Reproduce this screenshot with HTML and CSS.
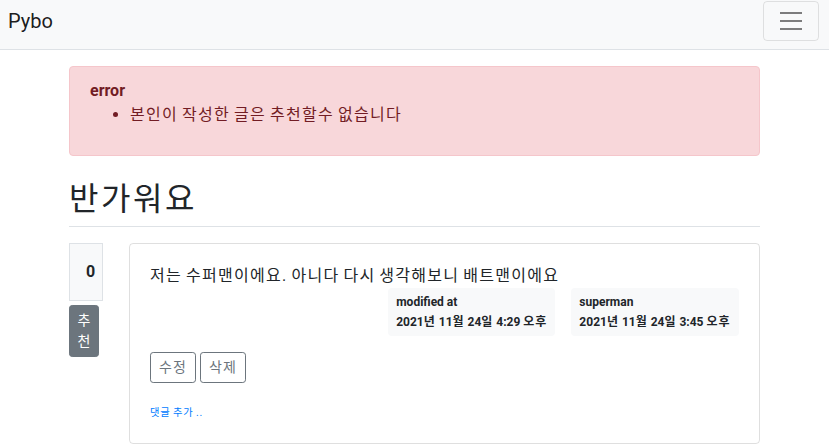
FILE: index.html
```
<!DOCTYPE html>
<html lang="ko">
<head>
<meta charset="utf-8">
<title>Pybo</title>
<link rel="stylesheet" href="styles.css">
</head>
<body>
<nav class="navbar">
  <a class="brand" href="#">Pybo</a>
  <button class="toggler" type="button" aria-label="메뉴">
    <svg class="toggler-icon" width="30" height="30" viewBox="0 0 30 30"><path d="M4 7h22M4 15h22M4 23h22" stroke="rgba(0,0,0,0.5)" stroke-width="2" stroke-linecap="butt" fill="none"/></svg>
  </button>
</nav>
<div class="container">
  <div class="alert">
    <strong>error</strong>
    <ul class="alert-list"><li class="ko">본인이 작성한 글은 추천할수 없습니다</li></ul>
  </div>
  <h2 class="title ko">반가워요</h2>
  <div class="row">
    <div class="vote">
      <div class="vote-count">0</div>
      <a class="vote-btn" href="#">추천</a>
    </div>
    <div class="card">
      <div class="card-body">
        <div class="card-text ko">저는 수퍼맨이에요. 아니다 다시 생각해보니 배트맨이에요</div>
        <div class="meta">
          <div class="badge badge-mod">
            <div class="badge-line">modified at</div>
            <div>2021<span class="ko">년</span> 11<span class="ko">월</span> 24<span class="ko">일</span> 4:29 <span class="ko">오후</span></div>
          </div>
          <div class="badge">
            <div class="badge-line">superman</div>
            <div>2021<span class="ko">년</span> 11<span class="ko">월</span> 24<span class="ko">일</span> 3:45 <span class="ko">오후</span></div>
          </div>
        </div>
        <div class="actions">
          <a class="btn-outline ko" href="#">수정</a>
          <a class="btn-outline ko" href="#">삭제</a>
        </div>
        <div class="comment"><a class="comment-link" href="#"><small class="ko">댓글 추가 ..</small></a></div>
      </div>
    </div>
  </div>
</div>
</body>
</html>
```

FILE: styles.css
```
* { box-sizing: border-box; }
html, body { margin: 0; }
body {
  font-family: Roboto, "Noto Sans CJK KR", sans-serif;
  font-size: 16px;
  line-height: 1.5;
  color: #212529;
  background: #fff;
}
a { text-decoration: none; }

/* Hangul in Noto Sans CJK is 0.92em wide; widen to full width */
.ko {
  letter-spacing: 0.08em;
  word-spacing: -0.08em;
}

.navbar {
  display: flex;
  justify-content: space-between;
  align-items: center;
  height: 50px;
  padding: 1px 10px 8px 8px;
  background: #f8f9fa;
  border-bottom: 1px solid #dee2e6;
}
.brand {
  font-size: 20px;
  line-height: 30px;
  color: rgba(0,0,0,0.9);
}
.toggler {
  display: flex;
  width: 56px;
  height: 40px;
  padding: 4px 12px;
  background: transparent;
  border: 1px solid rgba(0,0,0,0.1);
  border-radius: 4px;
}
.toggler-icon { display: block; }

.container {
  max-width: 720px;
  margin: 0 auto;
  padding: 0 15px 0 14.5px;
}

.alert {
  margin: 16px 0;
  padding: 12px 20px;
  background: #f8d7da;
  border: 1px solid #f5c6cb;
  border-radius: 4px;
  color: #721c24;
}
.alert strong { font-weight: 700; }
.alert-list {
  margin: 0 0 16px;
  padding-left: 40px;
}

.title {
  margin: 16px 0;
  padding: 8px 0;
  font-size: 32px;
  font-weight: 400;
  line-height: 1.2;
  border-bottom: 1px solid #dee2e6;
}

.row {
  display: flex;
  margin: 16px 0;
}
.vote {
  flex: 0 0 60px;
  display: flex;
  flex-direction: column;
  align-items: flex-start;
}
.vote-count {
  width: 34px;
  padding: 16px 0 16px 16px;
  margin-bottom: 4px;
  background: #f8f9fa;
  border: 1px solid #dee2e6;
  font-weight: 700;
  line-height: 24px;
}
.vote-btn {
  width: 30px;
  padding: 4px 7px;
  font-size: 14px;
  line-height: 21px;
  text-align: center;
  color: #fff;
  background: #6c757d;
  border: 1px solid #6c757d;
  border-radius: 3.2px;
}

.card {
  flex: 1;
  border: 1px solid rgba(0,0,0,0.125);
  border-radius: 4px;
}
.card-body { padding: 20px; }
.card-text { line-height: 24px; }

.meta {
  display: flex;
  justify-content: flex-end;
}
.badge {
  padding: 8px;
  font-size: 12px;
  font-weight: 700;
  line-height: 1;
  background: #f8f9fa;
  color: #212529;
  border-radius: 4px;
  white-space: nowrap;
}
.badge-mod { margin: 0 16px; }
.badge-line { margin-bottom: 8px; }

.actions {
  display: flex;
  gap: 4px;
  margin: 16px 0;
}
.btn-outline {
  padding: 4px 8px;
  font-size: 14px;
  line-height: 21px;
  color: #6c757d;
  border: 1px solid #6c757d;
  border-radius: 3.2px;
}
.comment-link {
  font-size: 80%;
  color: #007bff;
}
.comment-link small { font-size: 80%; }
```
